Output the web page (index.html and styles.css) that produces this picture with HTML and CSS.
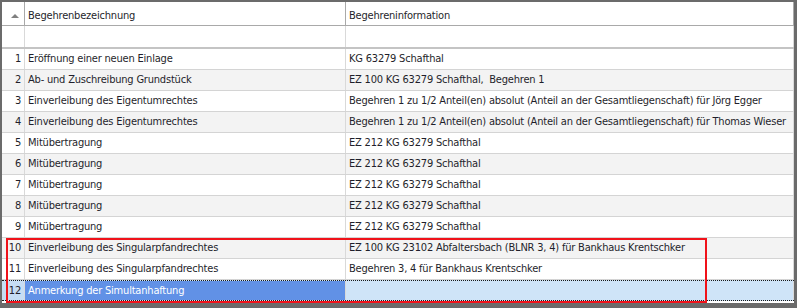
FILE: index.html
```html
<!DOCTYPE html>
<html lang="de">
<head>
<meta charset="utf-8">
<title>Begehren</title>
<link rel="stylesheet" href="styles.css">
</head>
<body>
<div class="grid">
  <div class="row head">
    <div class="cell num"><span class="sort"></span></div>
    <div class="cell">Begehrenbezeichnung</div>
    <div class="cell">Begehreninformation</div>
  </div>
  <div class="row filter">
    <div class="cell num"></div>
    <div class="cell"></div>
    <div class="cell"></div>
  </div>
  <div class="row"><div class="cell num">1</div><div class="cell">Eröffnung einer neuen Einlage</div><div class="cell">KG 63279 Schafthal</div></div>
  <div class="row alt"><div class="cell num">2</div><div class="cell">Ab- und Zuschreibung Grundstück</div><div class="cell">EZ 100 KG 63279 Schafthal,&nbsp; Begehren 1</div></div>
  <div class="row"><div class="cell num">3</div><div class="cell">Einverleibung des Eigentumrechtes</div><div class="cell">Begehren 1 zu 1/2 Anteil(en) absolut (Anteil an der Gesamtliegenschaft) für Jörg Egger</div></div>
  <div class="row alt"><div class="cell num">4</div><div class="cell">Einverleibung des Eigentumrechtes</div><div class="cell">Begehren 1 zu 1/2 Anteil(en) absolut (Anteil an der Gesamtliegenschaft) für Thomas Wieser</div></div>
  <div class="row"><div class="cell num">5</div><div class="cell">Mitübertragung</div><div class="cell">EZ 212 KG 63279 Schafthal</div></div>
  <div class="row alt"><div class="cell num">6</div><div class="cell">Mitübertragung</div><div class="cell">EZ 212 KG 63279 Schafthal</div></div>
  <div class="row"><div class="cell num">7</div><div class="cell">Mitübertragung</div><div class="cell">EZ 212 KG 63279 Schafthal</div></div>
  <div class="row alt"><div class="cell num">8</div><div class="cell">Mitübertragung</div><div class="cell">EZ 212 KG 63279 Schafthal</div></div>
  <div class="row"><div class="cell num">9</div><div class="cell">Mitübertragung</div><div class="cell">EZ 212 KG 63279 Schafthal</div></div>
  <div class="row alt"><div class="cell num">10</div><div class="cell">Einverleibung des Singularpfandrechtes</div><div class="cell">EZ 100 KG 23102 Abfaltersbach (BLNR 3, 4) für Bankhaus Krentschker</div></div>
  <div class="row"><div class="cell num">11</div><div class="cell">Einverleibung des Singularpfandrechtes</div><div class="cell">Begehren 3, 4 für Bankhaus Krentschker</div></div>
  <div class="row selected"><div class="cell num">12</div><div class="cell focus">Anmerkung der Simultanhaftung</div><div class="cell">&nbsp;</div></div>
  <div class="mark"></div>
</div>
</body>
</html>
```
FILE: styles.css
```css
html, body {
  margin: 0;
  padding: 0;
  background: #ffffff;
}
.grid {
  position: relative;
  width: 797px;
  height: 308px;
  box-sizing: border-box;
  border-style: solid;
  border-color: #6b6b6b;
  border-width: 2px 3px 5px 2px;
  background: #ffffff;
  font-family: "DejaVu Sans Condensed", "DejaVu Sans", sans-serif;
  font-stretch: condensed;
  font-size: 11px;
  letter-spacing: -0.2px;
  color: #1f1f2b;
  overflow: hidden;
}
.row {
  display: grid;
  grid-template-columns: 23px 321px 448px;
  height: 21px;
  box-sizing: border-box;
  border-bottom: 1px solid #d4d4d4;
}
.cell {
  box-sizing: border-box;
  border-right: 1px solid #d9d9d9;
  padding: 0 3px;
  line-height: 20px;
  white-space: nowrap;
  overflow: hidden;
}
.num {
  text-align: right;
  padding: 0 3px 0 0;
}
.head {
  height: 24px;
  border-bottom: 1px solid #a9a9a9;
}
.head .cell {
  border-right-color: #a9a9a9;
  padding-top: 4px;
  line-height: 19px;
}
.head .num {
  display: flex;
  justify-content: center;
  padding: 12px 0 0 4px;
}
.sort {
  width: 0;
  height: 0;
  border-left: 4px solid transparent;
  border-right: 4px solid transparent;
  border-bottom: 4px solid #808080;
}
.filter {
  height: 23px;
  border-bottom: 2px solid #c4c4c4;
}
.alt {
  background: #f3f3f3;
}
.selected {
  background: #cfe4f8;
  border-top: 1px dotted #1a1a1a;
  border-bottom: 1px dotted #1a1a1a;
}
.selected .cell {
  line-height: 19px;
}
.selected .num {
  background: #c6ddf4;
}
.selected .focus {
  background: #6191e6;
  color: #ffffff;
}
.mark {
  position: absolute;
  left: 4px;
  top: 236px;
  width: 701px;
  height: 65px;
  box-sizing: border-box;
  border: 2px solid #f0121a;
}
```
